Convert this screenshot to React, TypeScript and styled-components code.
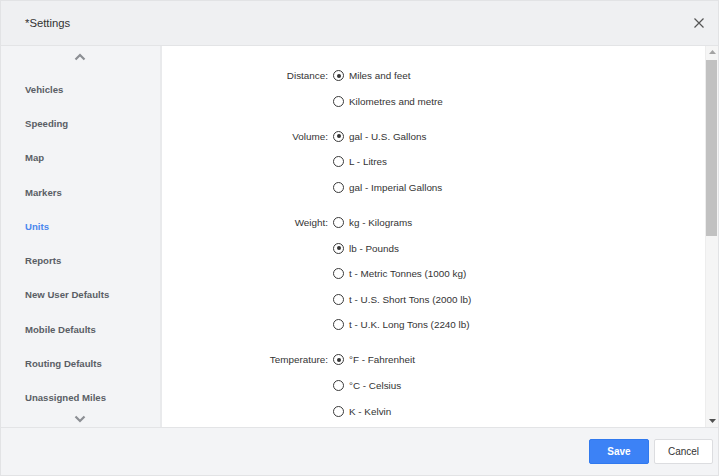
import React, { ReactElement } from "react"
import styled, { createGlobalStyle } from "styled-components"

// ************
// data
// ************

type Group_I = {
	label: string
	options: string[]
	selected: number
}

const MENU: string[] = [
	"Vehicles",
	"Speeding",
	"Map",
	"Markers",
	"Units",
	"Reports",
	"New User Defaults",
	"Mobile Defaults",
	"Routing Defaults",
	"Unassigned Miles",
]

const GROUPS: Group_I[] = [
	{ label: "Distance:", options: ["Miles and feet", "Kilometres and metre"], selected: 0 },
	{
		label: "Volume:",
		options: ["gal - U.S. Gallons", "L - Litres", "gal - Imperial Gallons"],
		selected: 0,
	},
	{
		label: "Weight:",
		options: [
			"kg - Kilograms",
			"lb - Pounds",
			"t - Metric Tonnes (1000 kg)",
			"t - U.S. Short Tons (2000 lb)",
			"t - U.K. Long Tons (2240 lb)",
		],
		selected: 1,
	},
	{
		label: "Temperature:",
		options: ["°F - Fahrenheit", "°C - Celsius", "K - Kelvin"],
		selected: 0,
	},
]

// ************
// component
// ************

export default function App(): ReactElement {
	return (
		<>
			<GlobalStyle />
			<Dialog>
				<Header>
					<Title>*Settings</Title>
					<CloseButton aria-label="Close">
						<svg width="10" height="10" viewBox="0 0 10 10">
							<path d="M0.5 0.5 L9.5 9.5 M9.5 0.5 L0.5 9.5" stroke="#555" strokeWidth="1.2" />
						</svg>
					</CloseButton>
				</Header>

				<Body>
					<Sidebar>
						<Chevron $height={26}>
							<svg width="12" height="8" viewBox="0 0 12 8">
								<path d="M1.5 6.5 L6 2 L10.5 6.5" fill="none" stroke="#8c8f94" strokeWidth="2.2" />
							</svg>
						</Chevron>
						{MENU.map((item) => (
							<MenuItem key={item} $active={item === "Units"}>
								{item}
							</MenuItem>
						))}
						<Chevron $height={12} $align="flex-start">
							<svg width="12" height="8" viewBox="0 0 12 8">
								<path d="M1.5 1.5 L6 6 L10.5 1.5" fill="none" stroke="#8c8f94" strokeWidth="2.2" />
							</svg>
						</Chevron>
					</Sidebar>

					<Main>
						{GROUPS.map((group) => (
							<Group key={group.label}>
								{group.options.map((option, i) => (
									<Row key={option}>
										<Label>{i === 0 ? group.label : ""}</Label>
										<Option>
											<Radio $checked={i === group.selected} />
											{option}
										</Option>
									</Row>
								))}
							</Group>
						))}
					</Main>

					<Scrollbar>
						<ScrollArrow>
							<svg width="7" height="4" viewBox="0 0 7 4">
								<path d="M0 4 L3.5 0 L7 4 Z" fill="#a3a3a3" />
							</svg>
						</ScrollArrow>
						<Track>
							<Thumb />
						</Track>
						<ScrollArrow>
							<svg width="7" height="4" viewBox="0 0 7 4">
								<path d="M0 0 L3.5 4 L7 0 Z" fill="#505050" />
							</svg>
						</ScrollArrow>
					</Scrollbar>
				</Body>

				<Footer>
					<Button $primary>Save</Button>
					<Button>Cancel</Button>
				</Footer>
			</Dialog>
		</>
	)
}

// ************
// styles
// ************

const GlobalStyle = createGlobalStyle`
	html, body {
		margin: 0;
		padding: 0;
		background: #ffffff;
	}
	* {
		box-sizing: border-box;
	}
	body {
		font-family: "Liberation Sans", Arial, sans-serif;
	}
`
const Dialog = styled.div`
	display: flex;
	flex-direction: column;

	width: 719px;
	height: 476px;
	border: 1px solid #e2e3e5;

	background: #ffffff;
	overflow: hidden;
`
const Header = styled.header`
	display: flex;
	justify-content: space-between;
	align-items: center;

	height: 45px;
	padding: 0 14px 0 24px;
	border-bottom: 1px solid #e3e4e6;

	background: #eff0f2;
`
const Title = styled.span`
	font-size: 11.3px;
	color: #333333;
`
const CloseButton = styled.button`
	display: grid;
	place-items: center;

	padding: 0;
	border: none;

	background: none;
	cursor: pointer;
`
const Body = styled.div`
	display: flex;
	height: 381px;
`
const Sidebar = styled.nav`
	display: flex;
	flex-direction: column;

	width: 161px;
	flex-shrink: 0;
	border-right: 2px solid #e9eaec;

	background: #f3f4f6;
`
const Chevron = styled.div<{ $height: number; $align?: string }>`
	display: flex;
	justify-content: center;
	align-items: ${({ $align }) => $align || "center"};

	height: ${({ $height }) => $height}px;
	padding-right: 2px;
	padding-bottom: ${({ $align }) => ($align ? 0 : 4)}px;
`
const MenuItem = styled.div<{ $active?: boolean }>`
	display: flex;
	align-items: center;

	height: 34.3px;
	padding-left: 24px;

	font-size: 9.6px;
	font-weight: bold;
	color: ${({ $active }) => ($active ? "#4a87ee" : "#5a5e65")};
	cursor: pointer;
`
const Main = styled.main`
	flex: 1;
	padding-top: 17px;
	overflow: hidden;
`
const Group = styled.div`
	margin-bottom: 9.4px;
`
const Row = styled.div`
	display: grid;
	grid-template-columns: 166px 1fr;
	column-gap: 5px;
	align-items: center;

	height: 25.6px;
`
const Label = styled.span`
	text-align: right;
	font-size: 9.9px;
	color: #333333;
`
const Option = styled.label`
	display: flex;
	align-items: center;
	gap: 5px;

	font-size: 9.9px;
	color: #333333;
`
const Radio = styled.span<{ $checked?: boolean }>`
	display: grid;
	place-items: center;

	width: 11px;
	height: 11px;
	border: 1.5px solid #3a3a3a;
	border-radius: 50%;

	&::after {
		content: "";
		display: ${({ $checked }) => ($checked ? "block" : "none")};
		width: 4px;
		height: 4px;
		border-radius: 50%;
		background: #333333;
	}
`
const Scrollbar = styled.div`
	display: flex;
	flex-direction: column;

	width: 13px;
	flex-shrink: 0;
	border-left: 1px solid #ededed;

	background: #f5f5f5;
`
const ScrollArrow = styled.div`
	display: grid;
	place-items: center;

	height: 12px;
`
const Track = styled.div`
	flex: 1;
	padding: 2px 1px 0 0;
`
const Thumb = styled.div`
	height: 176px;
	background: #c1c1c1;
`
const Footer = styled.footer`
	display: flex;
	justify-content: flex-end;
	align-items: center;
	gap: 5px;

	flex: 1;
	padding: 0 5px 0 0;
	border-top: 1px solid #e3e4e6;

	background: #f3f4f6;
`
const Button = styled.button<{ $primary?: boolean }>`
	width: ${({ $primary }) => ($primary ? 60 : 59)}px;
	height: 25px;
	border: 1px solid ${({ $primary }) => ($primary ? "#3079ee" : "#dcdde0")};
	border-radius: 2px;

	background: ${({ $primary }) => ($primary ? "#3c82f6" : "#ffffff")};
	font-family: "Liberation Sans", Arial, sans-serif;
	font-size: 10px;
	font-weight: ${({ $primary }) => ($primary ? "bold" : "normal")};
	color: ${({ $primary }) => ($primary ? "#ffffff" : "#333333")};
	cursor: pointer;
`
